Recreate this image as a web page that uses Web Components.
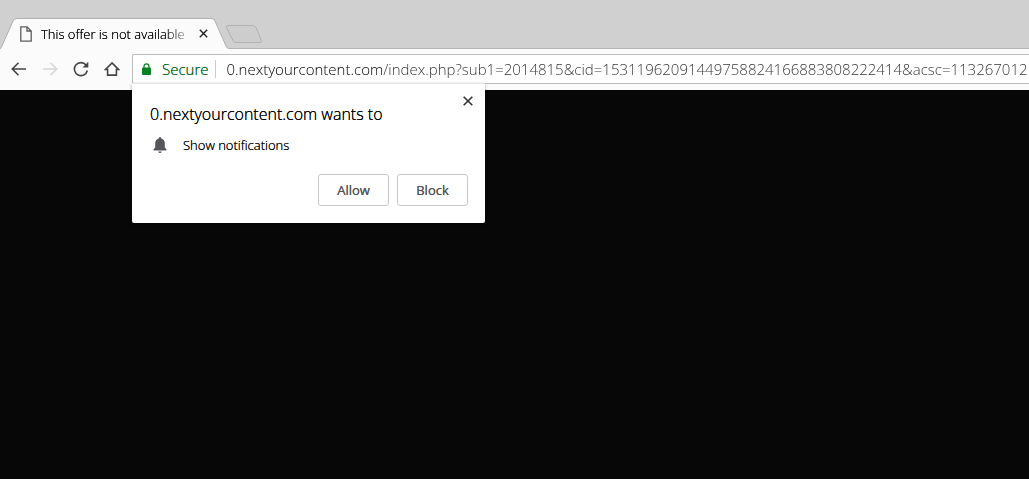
<!DOCTYPE html>
<html lang="en">
<head>
<meta charset="utf-8">
<title>This offer is not available</title>
<style>
  body { margin: 0; background: #070707; font-family: "Open Sans", "Noto Sans", sans-serif; }
</style>
</head>
<body>
<browser-window>
  <tab-strip slot="tabs"><browser-tab>This offer is not available</browser-tab></tab-strip>
  <tool-bar slot="toolbar">
    <location-bar value="0.nextyourcontent.com/index.php?sub1=2014815&amp;cid=15311962091449758824166883808222414&amp;acsc=113267012">
      <permission-prompt>
        <span slot="title">0.nextyourcontent.com wants to</span>
        <span slot="permission">Show notifications</span>
      </permission-prompt>
    </location-bar>
  </tool-bar>
</browser-window>

<script>
const define = (name, html, setup) => {
  const template = document.createElement('template');
  template.innerHTML = html;
  customElements.define(name, class extends HTMLElement {
    constructor() {
      super();
      this.attachShadow({ mode: 'open' }).append(template.content.cloneNode(true));
    }
    connectedCallback() { if (setup) setup(this, this.shadowRoot); }
  });
};

define('browser-window', `
  <style>
    :host { display: flex; flex-direction: column; min-height: 100vh; }
    main { flex: 1; background: #070707; }
  </style>
  <slot name="tabs"></slot>
  <slot name="toolbar"></slot>
  <main></main>`);

define('tab-strip', `
  <style>
    :host { display: flex; align-items: flex-end; height: 31px; padding-top: 18px; background: #d0d0d0; box-shadow: inset 0 -1px #b4b4b4; }
    button { align-self: flex-start; margin: 7px 0 0 -6px; width: 42px; height: 20px; padding: 0; border: 0; background: none; }
    svg { display: block; }
  </style>
  <slot></slot>
  <button aria-label="New tab"><svg width="42" height="20" viewBox="0 0 42 20"><path d="M5 .5H30Q32 .5 33 2.500L38.500 15.500Q39 17.500 37 17.500H13Q11 17.500 10 15.500L3.500 2.500Q3 .5 5 .5Z" fill="#cdcdcd" stroke="#b2b2b2"/></svg></button>`);

define('browser-tab', `
  <style>
    :host { position: relative; display: flex; align-items: center; box-sizing: border-box; width: 229px; height: 31px; padding: 0 18px 0 20px; }
    .shape { position: absolute; inset: 0; z-index: 0; }
    .icon, .title, button { position: relative; }
    .icon { flex: none; }
    .title { flex: 1; margin-left: 9px; font-size: 13px; font-weight: 300; line-height: 20px; color: #000; text-shadow: 0 0 currentColor; white-space: nowrap; overflow: hidden;
      -webkit-mask-image: linear-gradient(to right, #000 122px, transparent 154px); mask-image: linear-gradient(to right, #000 122px, transparent 154px); }
    button { flex: none; display: grid; place-items: center; width: 16px; height: 16px; margin: 0 0 0 4px; padding: 0; border: 0; background: none; }
  </style>
  <svg class="shape" width="229" height="31" viewBox="0 0 229 31"><path d="M0 31L1.500 29L13 3Q14 .5 17 .5H211Q214 .5 215 3L226 28Q227 30.500 229 30.500V31Z" fill="#fbfbfb"/><path d="M0 31L1.500 29L13 3Q14 .5 17 .5H211Q214 .5 215 3L226 28Q227 30.500 229 30.500" fill="none" stroke="#b0b0b0"/></svg>
  <svg class="icon" width="12" height="16" viewBox="0 0 12 16"><path d="M.8.800H7L11.200 5V15.200H.8ZM7 .8V5H11.200" fill="none" stroke="#5c5c5c" stroke-width="1.300"/></svg>
  <span class="title"><slot></slot></span>
  <button aria-label="Close tab"><svg width="9" height="9" viewBox="0 0 9 9"><path d="M.8.800L8.200 8.200M8.200.800L.8 8.200" stroke="#222" stroke-width="1.400"/></svg></button>`);

define('tool-bar', `
  <style>
    :host { display: flex; align-items: flex-start; gap: 3px; padding: 5px 0 6px 5px; background: #fbfbfb; }
    button { flex: none; display: grid; place-items: center; width: 28px; height: 30px; padding: 0; border: 0; background: none; color: #444; }
    button:disabled { color: #d6d6d6; }
    svg { fill: none; stroke: currentColor; stroke-width: 1.600; }
    slot { display: block; flex: 1; min-width: 0; margin-left: 3px; }
  </style>
  <button aria-label="Back"><svg width="16" height="14" viewBox="0 0 16 14"><path d="M15 7H1.500M7.500 .8L1.300 7L7.500 13.200"/></svg></button>
  <button aria-label="Forward" disabled><svg width="16" height="14" viewBox="0 0 16 14"><path d="M1 7H14.500M8.500 .8L14.700 7L8.500 13.200"/></svg></button>
  <button aria-label="Reload"><svg width="16" height="16" viewBox="0 0 16 16"><path d="M13 4A6.500 6.500 0 1 0 14.300 9.500"/><path d="M15.300 .8V6.500H9.600Z" fill="currentColor" stroke="none"/></svg></button>
  <button aria-label="Home"><svg width="16" height="16" viewBox="0 0 16 16"><path d="M8 2L1.500 8.500H3.600V14.100H12.400V8.500H14.500Z"/></svg></button>
  <slot></slot>`);

define('location-bar', `
  <style>
    :host { position: relative; display: flex; align-items: center; box-sizing: border-box; height: 30px; padding-left: 9px; border: 1px solid #bcbcbc; border-right: 0; border-radius: 2px 0 0 2px; background: #fff; }
    svg { flex: none; }
    .secure { flex: none; margin-left: 11px; padding-right: 7px; border-right: 1px solid #ccc; font-size: 15px; font-weight: 300; line-height: 18px; color: #0b6a2b; text-shadow: 0 0 currentColor; }
    input { flex: 1; min-width: 0; height: 28px; margin-left: 10px; padding: 0; border: 0; outline: 0; font: 300 15px "Open Sans", "Noto Sans", sans-serif; color: #333;
      -webkit-text-fill-color: transparent; background: linear-gradient(to right, #000 156px, #333 156px); -webkit-background-clip: text; background-clip: text; }
  </style>
  <svg width="9" height="12" viewBox="0 0 9 12"><path d="M2 5V3.300A2.500 2.500 0 0 1 7 3.300V5" fill="none" stroke="#087f23" stroke-width="1.300"/><rect y="4.500" width="9" height="7.500" rx="1" fill="#087f23"/></svg>
  <span class="secure">Secure</span>
  <input type="text" aria-label="Address" spellcheck="false">
  <slot></slot>`, (host, root) => { root.querySelector('input').value = host.getAttribute('value'); });

define('permission-prompt', `
  <style>
    :host { position: absolute; top: 28px; left: -1px; z-index: 1; box-sizing: border-box; width: 353px; padding: 19px 17px 17px 18px; border-top: 1px solid #e6e6e6; border-radius: 0 0 2px 2px; background: #fff; box-shadow: 0 1px 3px rgba(0,0,0,.4); text-shadow: 0 0 currentColor; }
    h1 { margin: 0; font-size: 16px; font-weight: 300; line-height: 22px; color: #000; white-space: nowrap; }
    .row { display: flex; align-items: center; gap: 15px; margin: 10px 0 0 2px; font-size: 13px; font-weight: 300; line-height: 20px; color: #000; }
    .actions { display: flex; justify-content: flex-end; gap: 8px; margin-top: 19px; }
    .actions button { width: 71px; height: 32px; padding: 0; border: 1px solid #c8c8c8; border-radius: 3px; background: #fff; font: 400 13px "Open Sans", "Noto Sans", sans-serif; color: #555; text-shadow: 0 0 currentColor; }
    .close { position: absolute; top: 8px; right: 8px; display: grid; place-items: center; width: 18px; height: 18px; padding: 0; border: 0; background: none; }
  </style>
  <h1><slot name="title"></slot></h1>
  <button class="close" aria-label="Close"><svg width="10" height="10" viewBox="0 0 10 10"><path d="M.7.700L9.300 9.300M9.300.700L.7 9.300" stroke="#333" stroke-width="1.600"/></svg></button>
  <div class="row"><svg width="16" height="18" viewBox="0 0 16 18"><path d="M8 1Q9.300 1 9.300 2.500Q12.800 3.500 12.800 7.500V11.500L14.500 13.500V14.500H1.500V13.500L3.200 11.500V7.500Q3.200 3.500 6.700 2.500Q6.700 1 8 1ZM6.300 15.500H9.700Q9.500 17 8 17Q6.500 17 6.300 15.500Z" fill="#55565c"/></svg><slot name="permission"></slot></div>
  <div class="actions"><button>Allow</button><button>Block</button></div>`);
</script>
</body>
</html>
